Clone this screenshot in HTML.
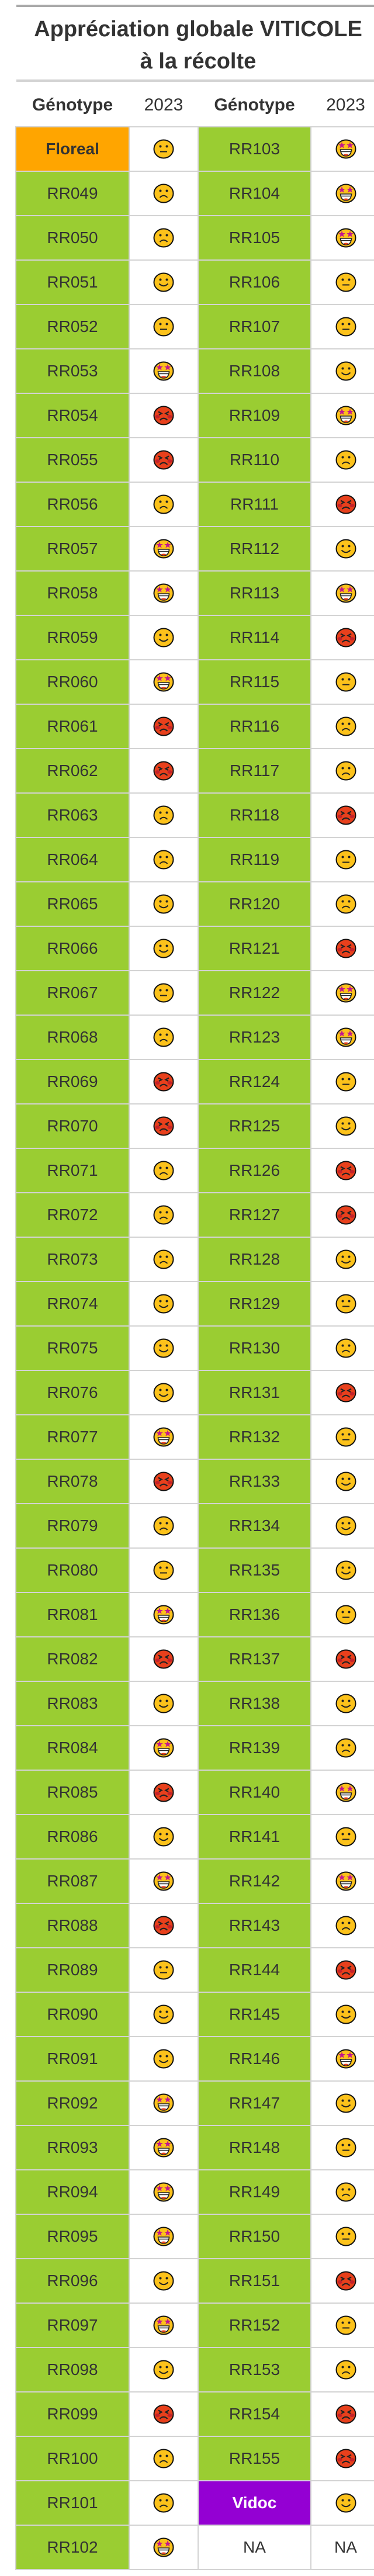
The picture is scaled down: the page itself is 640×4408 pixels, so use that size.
<!DOCTYPE html>
<html><head><meta charset="utf-8">
<style>
html,body{margin:0;padding:0;background:#fff;}
body{width:640px;height:4408px;overflow:hidden;position:relative;font-family:"Liberation Sans",sans-serif;color:#333;}
.l1{position:absolute;left:28px;top:8px;width:640px;height:4px;background:#a9a9a9;}
.l2{position:absolute;left:28px;top:136px;width:640px;height:4px;background:#d3d3d3;}
.title{position:absolute;left:26px;width:626px;top:23px;text-align:center;font-weight:bold;font-size:38px;line-height:55px;color:#333;}
.hd{position:absolute;top:160px;height:40px;line-height:40px;font-size:30px;text-align:center;}
table{position:absolute;left:26px;top:216px;border-collapse:separate;border-spacing:0;table-layout:fixed;width:626px;border-left:2px solid #d3d3d3;border-top:2px solid #d3d3d3;}
td{height:74px;padding:0;border-right:2px solid #d3d3d3;border-bottom:2px solid #d3d3d3;text-align:center;vertical-align:middle;font-size:28px;color:#333;}
td.g{background:#9acd32;}
td.o{background:#ffa500;font-weight:bold;}
td.v{background:#9400d3;font-weight:bold;color:#fff;}
td svg{display:block;margin:0 auto;}
</style></head><body>
<svg width="0" height="0" style="position:absolute">
<defs>
<g id="base"><ellipse cx="18" cy="17" rx="16.5" ry="15.5" fill="#fcc21b" stroke="#111" stroke-width="2"/></g>
<g id="eyes"><circle cx="12.5" cy="12.5" r="2" fill="#222"/><circle cx="23.5" cy="12.5" r="2" fill="#222"/></g>
<symbol id="N" viewBox="0 0 36 34"><use href="#base"/><use href="#eyes"/><path d="M12 21.5H24" stroke="#222" stroke-width="2" fill="none"/></symbol>
<symbol id="S" viewBox="0 0 36 34"><use href="#base"/><use href="#eyes"/><path d="M11.5 24Q18 17.5 24.5 24" stroke="#222" stroke-width="2" fill="none"/></symbol>
<symbol id="H" viewBox="0 0 36 34"><use href="#base"/><use href="#eyes"/><path d="M10.5 19.5Q18 27 25.5 19.5" stroke="#222" stroke-width="2" fill="none"/></symbol>
<symbol id="X" viewBox="0 0 36 34"><use href="#base"/>
<polygon points="11,5 12.6,9 16.8,9 13.4,11.6 14.7,15.6 11,13.2 7.3,15.6 8.6,11.6 5.2,9 9.4,9" fill="#c2168e"/>
<polygon points="25,5 26.6,9 30.8,9 27.4,11.6 28.7,15.6 25,13.2 21.3,15.6 22.6,11.6 19.2,9 23.4,9" fill="#c2168e"/>
<path d="M8.5 18H27.5Q26.5 29 18 29Q9.5 29 8.5 18Z" fill="#fff" stroke="#222" stroke-width="1.6"/>
<path d="M9 21.5H27" stroke="#222" stroke-width="1.4"/>
<path d="M13.5 26.5Q18 24.5 22.5 26.5Q20 28.6 18 28.6Q16 28.6 13.5 26.5Z" fill="#e8401c"/></symbol>
<symbol id="A" viewBox="0 0 36 34"><ellipse cx="18" cy="17" rx="16.5" ry="15.5" fill="#e8401c" stroke="#111" stroke-width="2"/>
<ellipse cx="7.5" cy="19" rx="4" ry="3" fill="#c4222a"/><ellipse cx="28.5" cy="19" rx="4" ry="3" fill="#c4222a"/>
<path d="M9 10.5L14.5 13.5L10 16M27 10.5L21.5 13.5L26 16" stroke="#222" stroke-width="2.2" fill="none"/>
<path d="M11.5 25Q18 18.5 24.5 25" stroke="#222" stroke-width="2.2" fill="none"/></symbol>
</defs></svg>
<div class="l1"></div>
<div class="title">Appréciation globale VITICOLE<br>à la récolte</div>
<div class="l2"></div>
<div class="hd" style="left:28px;width:192px;font-weight:bold;">Génotype</div>
<div class="hd" style="left:222px;width:116px;">2023</div>
<div class="hd" style="left:340px;width:191px;font-weight:bold;">Génotype</div>
<div class="hd" style="left:533px;width:117px;">2023</div>
<table>
<colgroup><col style="width:194px"><col style="width:118px"><col style="width:193px"><col style="width:119px"></colgroup>
<tr><td class="o">Floreal</td><td><svg width="36" height="34"><use href="#N"/></svg></td><td class="g">RR103</td><td><svg width="36" height="34"><use href="#X"/></svg></td></tr>
<tr><td class="g">RR049</td><td><svg width="36" height="34"><use href="#S"/></svg></td><td class="g">RR104</td><td><svg width="36" height="34"><use href="#X"/></svg></td></tr>
<tr><td class="g">RR050</td><td><svg width="36" height="34"><use href="#S"/></svg></td><td class="g">RR105</td><td><svg width="36" height="34"><use href="#X"/></svg></td></tr>
<tr><td class="g">RR051</td><td><svg width="36" height="34"><use href="#H"/></svg></td><td class="g">RR106</td><td><svg width="36" height="34"><use href="#N"/></svg></td></tr>
<tr><td class="g">RR052</td><td><svg width="36" height="34"><use href="#N"/></svg></td><td class="g">RR107</td><td><svg width="36" height="34"><use href="#N"/></svg></td></tr>
<tr><td class="g">RR053</td><td><svg width="36" height="34"><use href="#X"/></svg></td><td class="g">RR108</td><td><svg width="36" height="34"><use href="#H"/></svg></td></tr>
<tr><td class="g">RR054</td><td><svg width="36" height="34"><use href="#A"/></svg></td><td class="g">RR109</td><td><svg width="36" height="34"><use href="#X"/></svg></td></tr>
<tr><td class="g">RR055</td><td><svg width="36" height="34"><use href="#A"/></svg></td><td class="g">RR110</td><td><svg width="36" height="34"><use href="#S"/></svg></td></tr>
<tr><td class="g">RR056</td><td><svg width="36" height="34"><use href="#S"/></svg></td><td class="g">RR111</td><td><svg width="36" height="34"><use href="#A"/></svg></td></tr>
<tr><td class="g">RR057</td><td><svg width="36" height="34"><use href="#X"/></svg></td><td class="g">RR112</td><td><svg width="36" height="34"><use href="#H"/></svg></td></tr>
<tr><td class="g">RR058</td><td><svg width="36" height="34"><use href="#X"/></svg></td><td class="g">RR113</td><td><svg width="36" height="34"><use href="#X"/></svg></td></tr>
<tr><td class="g">RR059</td><td><svg width="36" height="34"><use href="#H"/></svg></td><td class="g">RR114</td><td><svg width="36" height="34"><use href="#A"/></svg></td></tr>
<tr><td class="g">RR060</td><td><svg width="36" height="34"><use href="#X"/></svg></td><td class="g">RR115</td><td><svg width="36" height="34"><use href="#N"/></svg></td></tr>
<tr><td class="g">RR061</td><td><svg width="36" height="34"><use href="#A"/></svg></td><td class="g">RR116</td><td><svg width="36" height="34"><use href="#S"/></svg></td></tr>
<tr><td class="g">RR062</td><td><svg width="36" height="34"><use href="#A"/></svg></td><td class="g">RR117</td><td><svg width="36" height="34"><use href="#S"/></svg></td></tr>
<tr><td class="g">RR063</td><td><svg width="36" height="34"><use href="#S"/></svg></td><td class="g">RR118</td><td><svg width="36" height="34"><use href="#A"/></svg></td></tr>
<tr><td class="g">RR064</td><td><svg width="36" height="34"><use href="#S"/></svg></td><td class="g">RR119</td><td><svg width="36" height="34"><use href="#N"/></svg></td></tr>
<tr><td class="g">RR065</td><td><svg width="36" height="34"><use href="#H"/></svg></td><td class="g">RR120</td><td><svg width="36" height="34"><use href="#S"/></svg></td></tr>
<tr><td class="g">RR066</td><td><svg width="36" height="34"><use href="#H"/></svg></td><td class="g">RR121</td><td><svg width="36" height="34"><use href="#A"/></svg></td></tr>
<tr><td class="g">RR067</td><td><svg width="36" height="34"><use href="#N"/></svg></td><td class="g">RR122</td><td><svg width="36" height="34"><use href="#X"/></svg></td></tr>
<tr><td class="g">RR068</td><td><svg width="36" height="34"><use href="#S"/></svg></td><td class="g">RR123</td><td><svg width="36" height="34"><use href="#X"/></svg></td></tr>
<tr><td class="g">RR069</td><td><svg width="36" height="34"><use href="#A"/></svg></td><td class="g">RR124</td><td><svg width="36" height="34"><use href="#N"/></svg></td></tr>
<tr><td class="g">RR070</td><td><svg width="36" height="34"><use href="#A"/></svg></td><td class="g">RR125</td><td><svg width="36" height="34"><use href="#H"/></svg></td></tr>
<tr><td class="g">RR071</td><td><svg width="36" height="34"><use href="#S"/></svg></td><td class="g">RR126</td><td><svg width="36" height="34"><use href="#A"/></svg></td></tr>
<tr><td class="g">RR072</td><td><svg width="36" height="34"><use href="#S"/></svg></td><td class="g">RR127</td><td><svg width="36" height="34"><use href="#A"/></svg></td></tr>
<tr><td class="g">RR073</td><td><svg width="36" height="34"><use href="#S"/></svg></td><td class="g">RR128</td><td><svg width="36" height="34"><use href="#H"/></svg></td></tr>
<tr><td class="g">RR074</td><td><svg width="36" height="34"><use href="#H"/></svg></td><td class="g">RR129</td><td><svg width="36" height="34"><use href="#N"/></svg></td></tr>
<tr><td class="g">RR075</td><td><svg width="36" height="34"><use href="#H"/></svg></td><td class="g">RR130</td><td><svg width="36" height="34"><use href="#S"/></svg></td></tr>
<tr><td class="g">RR076</td><td><svg width="36" height="34"><use href="#H"/></svg></td><td class="g">RR131</td><td><svg width="36" height="34"><use href="#A"/></svg></td></tr>
<tr><td class="g">RR077</td><td><svg width="36" height="34"><use href="#X"/></svg></td><td class="g">RR132</td><td><svg width="36" height="34"><use href="#N"/></svg></td></tr>
<tr><td class="g">RR078</td><td><svg width="36" height="34"><use href="#A"/></svg></td><td class="g">RR133</td><td><svg width="36" height="34"><use href="#H"/></svg></td></tr>
<tr><td class="g">RR079</td><td><svg width="36" height="34"><use href="#S"/></svg></td><td class="g">RR134</td><td><svg width="36" height="34"><use href="#H"/></svg></td></tr>
<tr><td class="g">RR080</td><td><svg width="36" height="34"><use href="#N"/></svg></td><td class="g">RR135</td><td><svg width="36" height="34"><use href="#H"/></svg></td></tr>
<tr><td class="g">RR081</td><td><svg width="36" height="34"><use href="#X"/></svg></td><td class="g">RR136</td><td><svg width="36" height="34"><use href="#N"/></svg></td></tr>
<tr><td class="g">RR082</td><td><svg width="36" height="34"><use href="#A"/></svg></td><td class="g">RR137</td><td><svg width="36" height="34"><use href="#A"/></svg></td></tr>
<tr><td class="g">RR083</td><td><svg width="36" height="34"><use href="#H"/></svg></td><td class="g">RR138</td><td><svg width="36" height="34"><use href="#H"/></svg></td></tr>
<tr><td class="g">RR084</td><td><svg width="36" height="34"><use href="#X"/></svg></td><td class="g">RR139</td><td><svg width="36" height="34"><use href="#S"/></svg></td></tr>
<tr><td class="g">RR085</td><td><svg width="36" height="34"><use href="#A"/></svg></td><td class="g">RR140</td><td><svg width="36" height="34"><use href="#X"/></svg></td></tr>
<tr><td class="g">RR086</td><td><svg width="36" height="34"><use href="#H"/></svg></td><td class="g">RR141</td><td><svg width="36" height="34"><use href="#N"/></svg></td></tr>
<tr><td class="g">RR087</td><td><svg width="36" height="34"><use href="#X"/></svg></td><td class="g">RR142</td><td><svg width="36" height="34"><use href="#X"/></svg></td></tr>
<tr><td class="g">RR088</td><td><svg width="36" height="34"><use href="#A"/></svg></td><td class="g">RR143</td><td><svg width="36" height="34"><use href="#S"/></svg></td></tr>
<tr><td class="g">RR089</td><td><svg width="36" height="34"><use href="#N"/></svg></td><td class="g">RR144</td><td><svg width="36" height="34"><use href="#A"/></svg></td></tr>
<tr><td class="g">RR090</td><td><svg width="36" height="34"><use href="#H"/></svg></td><td class="g">RR145</td><td><svg width="36" height="34"><use href="#H"/></svg></td></tr>
<tr><td class="g">RR091</td><td><svg width="36" height="34"><use href="#H"/></svg></td><td class="g">RR146</td><td><svg width="36" height="34"><use href="#X"/></svg></td></tr>
<tr><td class="g">RR092</td><td><svg width="36" height="34"><use href="#X"/></svg></td><td class="g">RR147</td><td><svg width="36" height="34"><use href="#H"/></svg></td></tr>
<tr><td class="g">RR093</td><td><svg width="36" height="34"><use href="#X"/></svg></td><td class="g">RR148</td><td><svg width="36" height="34"><use href="#N"/></svg></td></tr>
<tr><td class="g">RR094</td><td><svg width="36" height="34"><use href="#X"/></svg></td><td class="g">RR149</td><td><svg width="36" height="34"><use href="#S"/></svg></td></tr>
<tr><td class="g">RR095</td><td><svg width="36" height="34"><use href="#X"/></svg></td><td class="g">RR150</td><td><svg width="36" height="34"><use href="#N"/></svg></td></tr>
<tr><td class="g">RR096</td><td><svg width="36" height="34"><use href="#H"/></svg></td><td class="g">RR151</td><td><svg width="36" height="34"><use href="#A"/></svg></td></tr>
<tr><td class="g">RR097</td><td><svg width="36" height="34"><use href="#X"/></svg></td><td class="g">RR152</td><td><svg width="36" height="34"><use href="#N"/></svg></td></tr>
<tr><td class="g">RR098</td><td><svg width="36" height="34"><use href="#H"/></svg></td><td class="g">RR153</td><td><svg width="36" height="34"><use href="#S"/></svg></td></tr>
<tr><td class="g">RR099</td><td><svg width="36" height="34"><use href="#A"/></svg></td><td class="g">RR154</td><td><svg width="36" height="34"><use href="#A"/></svg></td></tr>
<tr><td class="g">RR100</td><td><svg width="36" height="34"><use href="#S"/></svg></td><td class="g">RR155</td><td><svg width="36" height="34"><use href="#A"/></svg></td></tr>
<tr><td class="g">RR101</td><td><svg width="36" height="34"><use href="#S"/></svg></td><td class="v">Vidoc</td><td><svg width="36" height="34"><use href="#H"/></svg></td></tr>
<tr><td class="g">RR102</td><td><svg width="36" height="34"><use href="#X"/></svg></td><td>NA</td><td>NA</td></tr>
</table>
</body></html>
